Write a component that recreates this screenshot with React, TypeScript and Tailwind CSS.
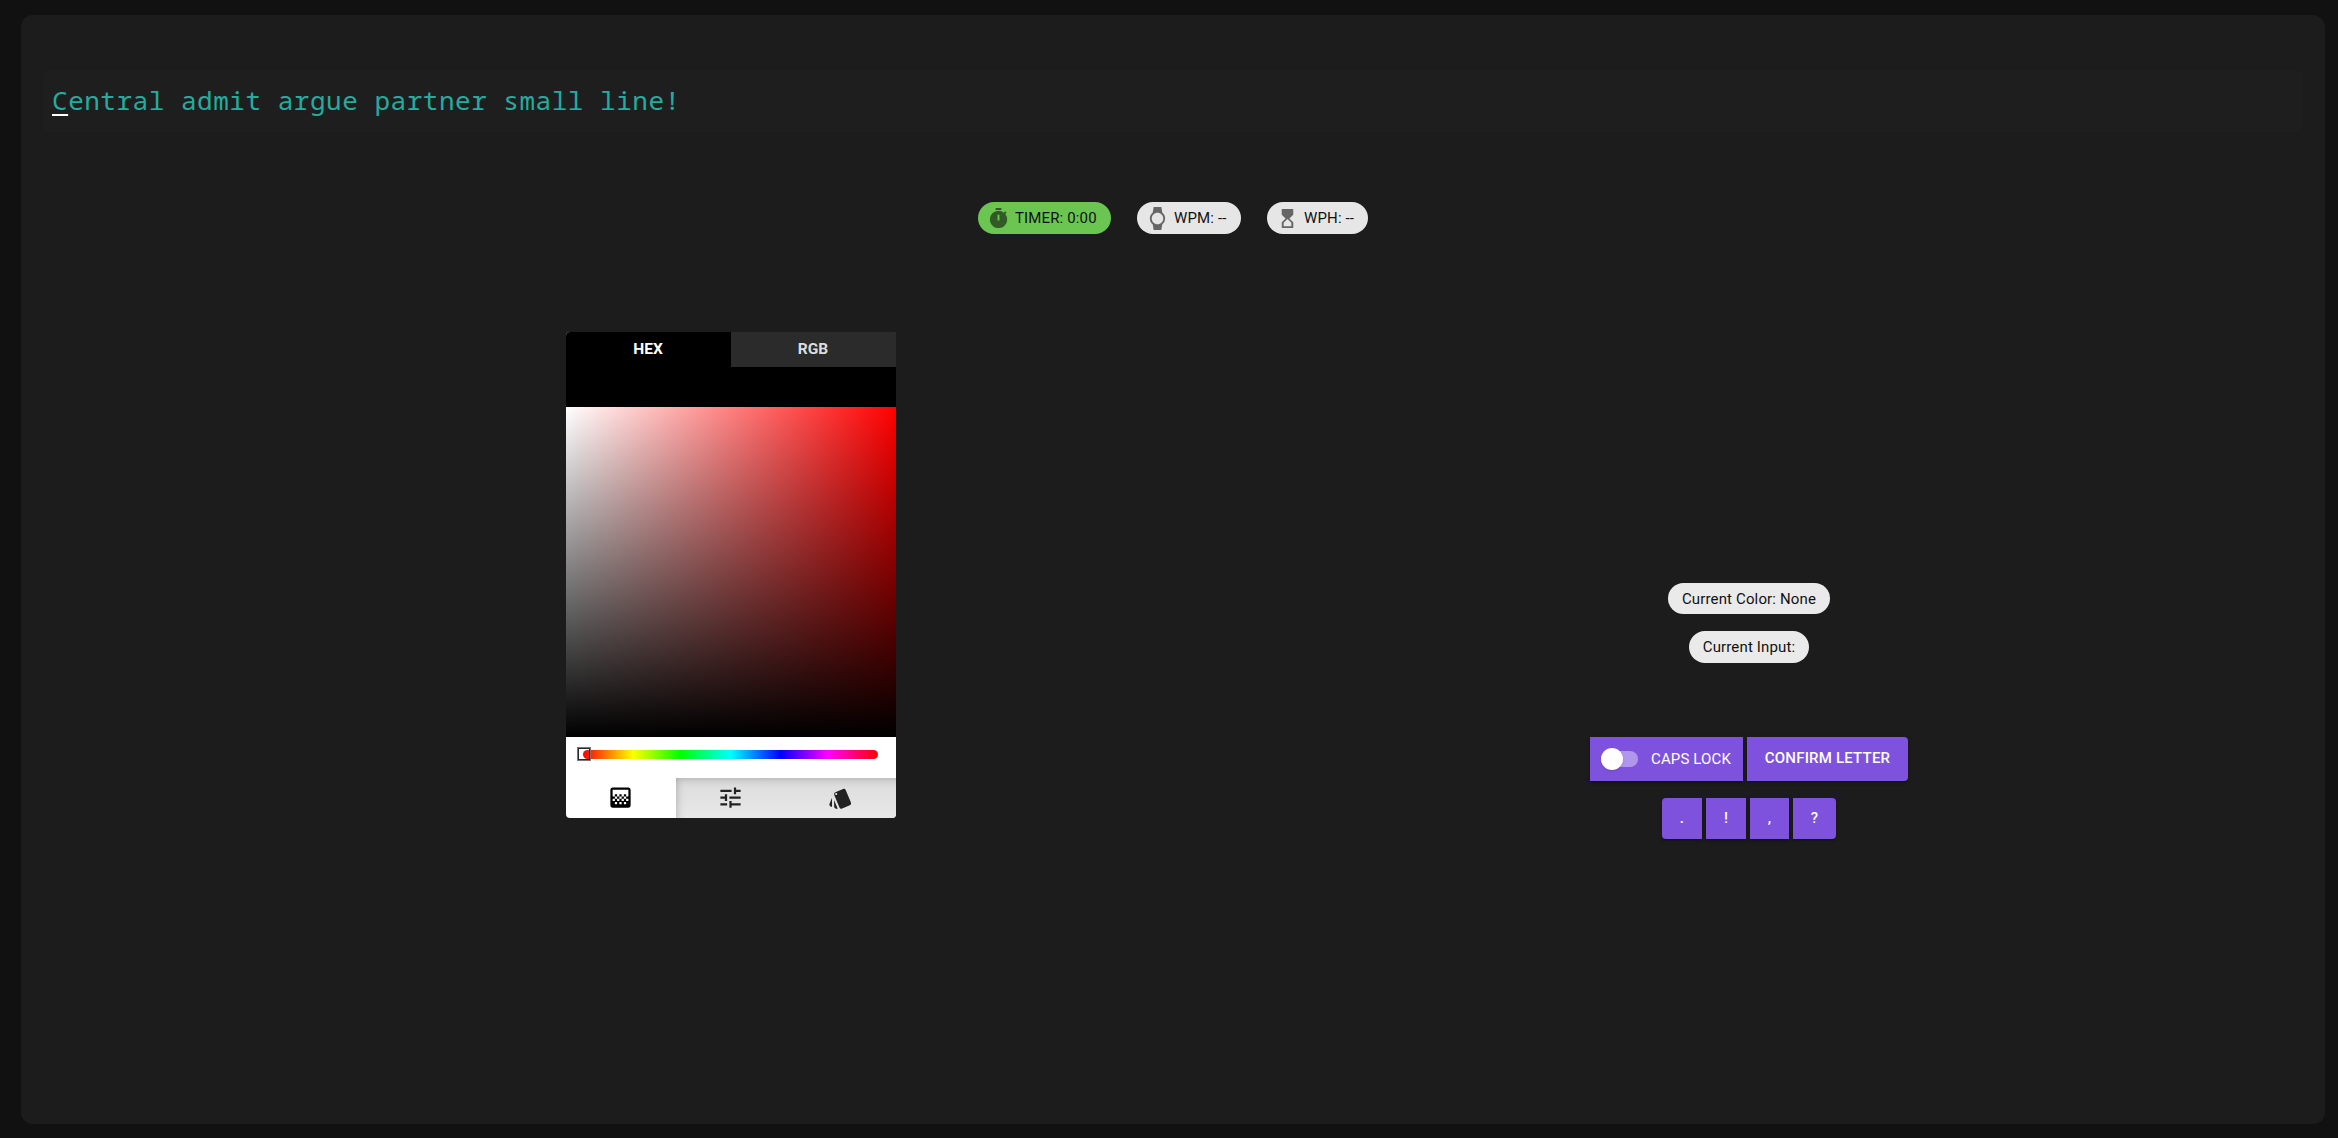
import { MdTimer, MdWatch, MdHourglassBottom, MdGradient, MdTune, MdStyle } from "react-icons/md";
import type { ReactNode } from "react";

const raised = "shadow-[0_3px_1px_-2px_rgba(0,0,0,.2),0_2px_2px_rgba(0,0,0,.14),0_1px_5px_rgba(0,0,0,.12)]";

function Chip({ icon, label, className }: { icon?: ReactNode; label: string; className: string }) {
  return (
    <div className={`flex shrink-0 items-center whitespace-nowrap rounded-full ${className}`}>
      {icon}
      <span>{label}</span>
    </div>
  );
}

export default function App() {
  return (
    <div className="h-[1138px] w-[2338px] overflow-hidden bg-[#111111] pt-[15px] pl-[21px] font-[Roboto,sans-serif]">
      <main className="h-[1109px] w-[2304px] rounded-xl bg-[#1c1c1c] pt-[55px]">
        <div className="ml-[22px] flex h-[62px] w-[2260px] items-center rounded-[5px] bg-[#1e1e1e] pb-[3px] pl-[9px]">
          <p className="whitespace-pre font-['Noto_Sans_Mono','DejaVu_Sans_Mono',monospace] text-[26px] leading-[36px] tracking-[0.52px] text-[#26ab9f]">
            <span className="underline decoration-white decoration-2 underline-offset-[4px] [text-decoration-skip-ink:none]">C</span>entral admit argue partner small line!
          </p>
        </div>
        <div className="mt-[70px] ml-[957px] flex text-[15px] tracking-[0.14px] text-[#111]">
          <Chip className="h-8 w-[133px] bg-[#6ac551] pl-[9px]" icon={<MdTimer className="mr-[5px] size-[23px] text-[#315a26]" />} label="TIMER: 0:00" />
          <Chip className="ml-[26px] h-8 w-[104px] bg-[#e6e6e6] pl-[9px]" icon={<MdWatch className="mr-[5px] size-[23px] text-[#666]" />} label="WPM: --" />
          <Chip className="ml-[26px] h-8 w-[101px] bg-[#e6e6e6] pl-[9px]" icon={<MdHourglassBottom className="mr-[5px] size-[23px] rotate-180 text-[#666]" />} label="WPH: --" />
        </div>
        <div className="mt-[98px] flex items-start">
          <section className="ml-[545px] w-[330px] overflow-hidden rounded bg-white">
            <div className="grid h-[35px] grid-cols-2 bg-black text-center text-[15.5px] font-bold leading-[34px] text-white">
              <div className="pr-px">HEX</div>
              <div className="bg-[#2b2b2b] pr-px text-[#ddd]">RGB</div>
            </div>
            <div className="h-10 bg-black" />
            <div className="h-[330px] bg-[linear-gradient(to_top,#000,transparent),linear-gradient(to_right,#fff,#f00)]" />
            <div className="flex h-[41px] pt-[10px] pl-[11px]">
              <div className="z-10 size-[14px] border border-[#777] shadow-[inset_0_0_0_1px_#2a2a2a]" />
              <div className="-ml-2 mt-[3px] h-[9px] w-[295px] rounded-full bg-[linear-gradient(to_right,#f00,#ff0_17%,#0f0_33%,#0ff_50%,#00f_67%,#f0f_83%,#f00)]" />
            </div>
            <div className="grid h-10 grid-cols-3">
              <div className="grid place-items-center pr-px pb-px"><MdGradient className="size-[27px] text-black" /></div>
              <div className="col-span-2 grid grid-cols-2 bg-[linear-gradient(to_bottom,#dcdcdc,#e8e8e8)] text-[#222] shadow-[inset_8px_8px_10px_-8px_rgba(0,0,0,.26)]">
                <div className="grid place-items-center pr-px pb-px"><MdTune className="size-[27px]" /></div>
                <div className="grid place-items-center pr-px"><MdStyle className="size-[25px]" /></div>
              </div>
            </div>
          </section>
          <section className="mt-[251px] ml-[694px] flex w-[318px] flex-col items-center text-[15px] tracking-[0.14px] text-[#111]">
            <Chip className="h-[31px] w-[162px] justify-center bg-[#eaeaea] pt-px" label="Current Color: None" />
            <Chip className="mt-[17px] h-8 w-[120px] justify-center bg-[#eaeaea]" label="Current Input:" />
            <div className="mt-[74px] flex w-full gap-1 text-white">
              <div className={`flex h-11 w-[153px] items-center pl-[11px] ${raised} bg-[#7e52dd]`}>
                <div className="h-4 w-[37px] rounded-full bg-[#b197eb]">
                  <div className="-mt-[3px] size-[22px] rounded-full bg-white shadow" />
                </div>
                <span className="ml-[13px]">CAPS LOCK</span>
              </div>
              <button className={`h-11 w-[161px] rounded-r bg-[#7e52dd] pb-0.5 font-medium tracking-[0.2px] ${raised}`}>CONFIRM LETTER</button>
            </div>
            <div className="mt-[17px] flex h-[41px] gap-1 font-medium text-white">
              <button className={`w-10 rounded-l bg-[#7e52dd] ${raised}`}>.</button>
              <button className={`w-10 bg-[#7e52dd] ${raised}`}>!</button>
              <button className={`w-[39px] bg-[#7e52dd] ${raised}`}>,</button>
              <button className={`w-[43px] rounded-r bg-[#7e52dd] ${raised}`}>?</button>
            </div>
          </section>
        </div>
      </main>
    </div>
  );
}
